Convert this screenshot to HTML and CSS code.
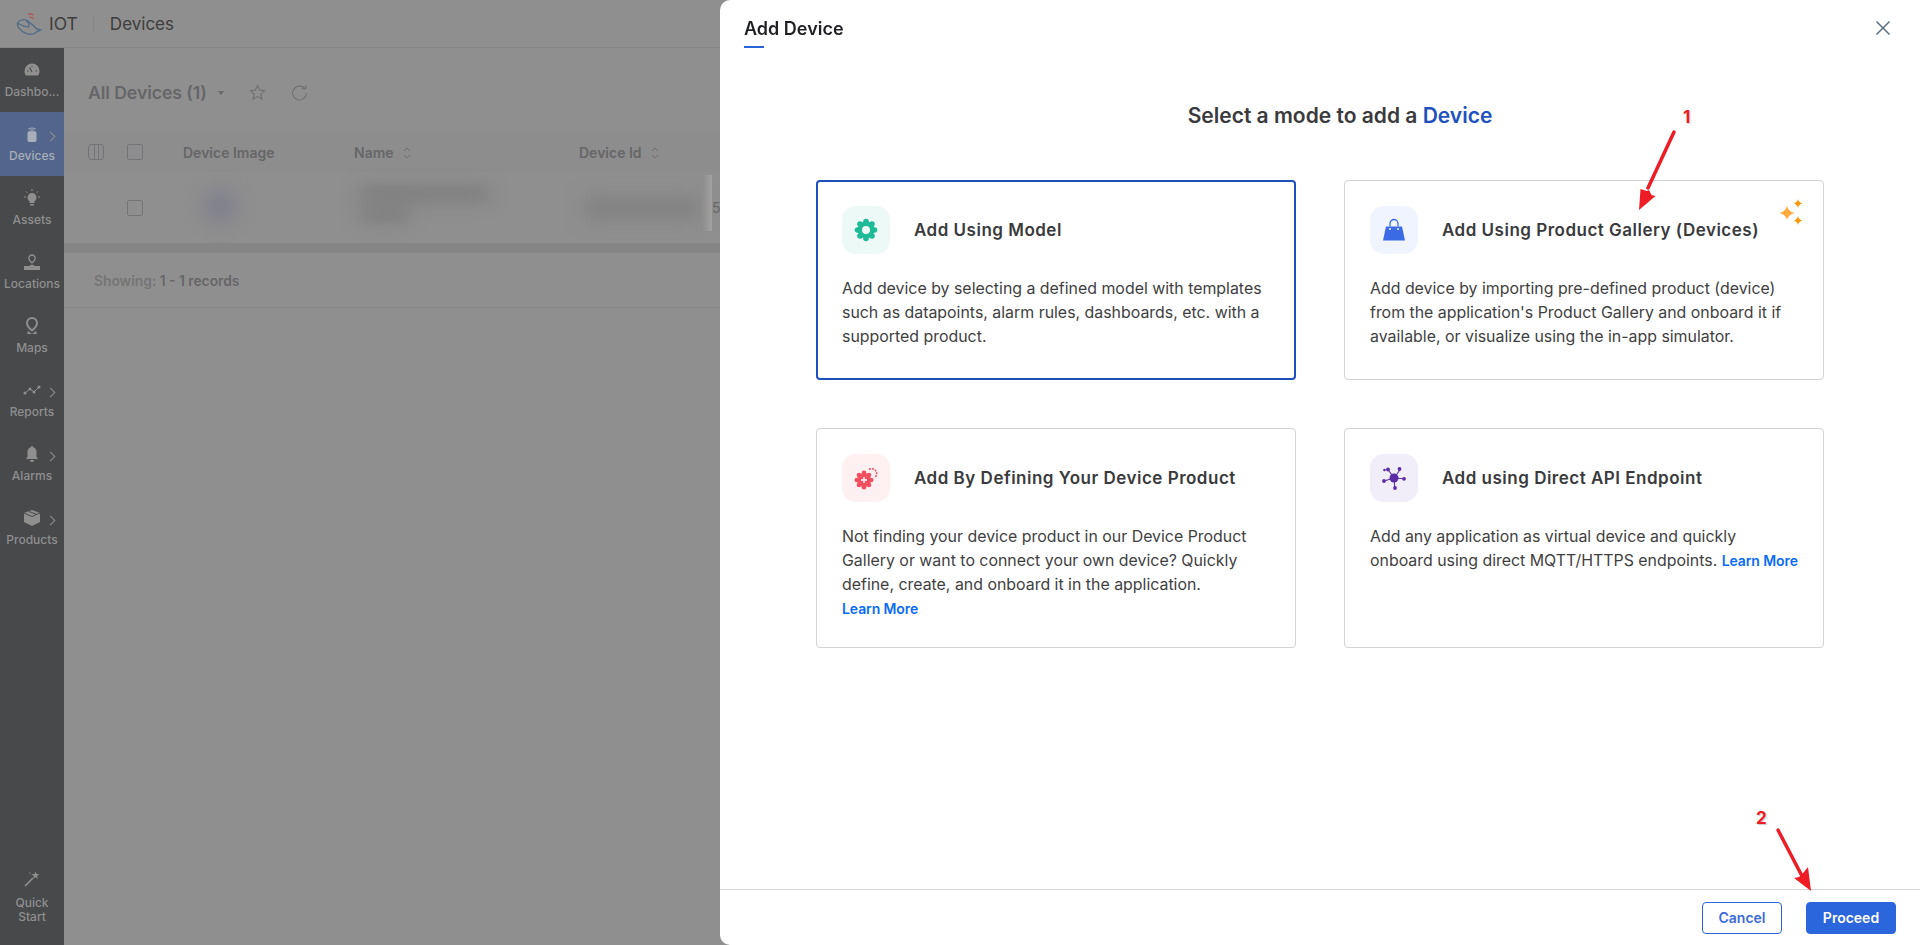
FILE: index.html
```html
<!DOCTYPE html>
<html lang="en">
<head>
<meta charset="utf-8">
<title>IOT - Devices</title>
<link rel="stylesheet" href="styles.css">
</head>
<body>
<div class="app">
  <header class="topbar">
    <svg class="logo" viewBox="0 0 26 24" width="26" height="24" fill="none">
      <path d="M1.500 11c2-3 6-4 9-3l8 6.500c1 2.500 3 3 6 3.500-2 1.500-4 1-5 3-4 2-9 1.500-13-1.500C3.500 17.500 1 14 1.500 11z" stroke="#4d6b85" stroke-width="1.300"/>
      <path d="M2 11.500c3 1.500 8 3.500 11 3.500M10 8.500c2.500 2 3.500 4 3 6.500" stroke="#4d6b85" stroke-width="1.100"/>
      <path d="M12 2.500c2-.8 4-.6 5.500.5M13 5.500c1.500-.5 3.500-.2 4.500 1.500" stroke="#a85a5a" stroke-width="1.300"/>
    </svg>
    <span class="app-name">IOT</span>
    <span class="divider"></span>
    <span class="page-name">Devices</span>
  </header>
  <div class="workspace">
    <nav class="sidebar">
      <a class="nav-item">
        <svg viewBox="0 0 16 16" width="16" height="16"><path class="ic" d="M8 1.500a7.500 7.500 0 0 0-7.500 7.500c0 1.800.5 3.400 1.500 4.500h12c1-1.100 1.500-2.700 1.500-4.500A7.500 7.500 0 0 0 8 1.500z"/><path d="M8 10 5.500 5.500M3 9h1.500M11.500 9H13M8 4v1" stroke="#48494b" stroke-width="1.100" fill="none"/></svg>
        <span>Dashbo...</span>
      </a>
      <a class="nav-item nav-active nav-more">
        <svg viewBox="0 0 16 20" width="16" height="20"><rect class="ic" x="3" y="7" width="10" height="12" rx="2"/><path class="arc" d="M4 4.500c2-1.500 6-1.500 8 0M5.500 6c1.500-.7 3.500-.7 5 0"/></svg>
        <span>Devices</span>
      </a>
      <a class="nav-item">
        <svg viewBox="0 0 16 18" width="16" height="18"><path class="ic" d="M8 4a4.500 4.500 0 0 0-2.500 8.200V14h5v-1.800A4.500 4.500 0 0 0 8 4z"/><path class="ic" d="M6 15h4v1.500H6z"/><path d="M8 0v2M2 2.500l1.300 1.300M14 2.500l-1.300 1.300M0 8h2M14 8h2" stroke="#8f8f8f" stroke-width="1"/></svg>
        <span>Assets</span>
      </a>
      <a class="nav-item">
        <svg viewBox="0 0 16 16" width="16" height="16"><path d="M8 1a3.200 3.200 0 0 0-3.200 3.200C4.800 6.500 8 9 8 9s3.200-2.500 3.200-4.800A3.200 3.200 0 0 0 8 1z" fill="none" stroke="#8f8f8f" stroke-width="1.300"/><path class="ic" d="M0 12h5l3-1.500 3 1.500h5v4H0z"/></svg>
        <span>Locations</span>
      </a>
      <a class="nav-item">
        <svg viewBox="0 0 16 18" width="16" height="18"><path d="M8 1a5 5 0 0 0-5 5c0 3.500 5 7.500 5 7.500s5-4 5-7.500a5 5 0 0 0-5-5z" fill="none" stroke="#8f8f8f" stroke-width="2"/><path class="ic" d="M4 14l4 3 4-3 1 3H3z"/></svg>
        <span>Maps</span>
      </a>
      <a class="nav-item nav-more">
        <svg viewBox="0 0 18 10" width="18" height="16"><path d="M2 8l5-4 4 3 5-5" stroke="#8f8f8f" stroke-width="1" fill="none"/><circle class="ic" cx="2" cy="8" r="1.500"/><circle class="ic" cx="7" cy="4" r="1.500"/><circle class="ic" cx="11" cy="7" r="1.500"/><circle class="ic" cx="16" cy="2" r="1.500"/></svg>
        <span>Reports</span>
      </a>
      <a class="nav-item nav-more">
        <svg viewBox="0 0 16 18" width="16" height="18"><path class="ic" d="M8 1a1.300 1.300 0 0 0-1.300 1.300C4.500 3 3.500 5 3.500 7v4.500L2 14h12l-1.500-2.500V7c0-2-1-4-3.200-4.700A1.300 1.300 0 0 0 8 1z"/><path class="ic" d="M6 15h4a2 2 0 0 1-4 0z"/></svg>
        <span>Alarms</span>
      </a>
      <a class="nav-item nav-more">
        <svg viewBox="0 0 16 16" width="16" height="16"><path class="ic" d="M8 0l8 3v9l-8 4-8-4V3z"/><path d="M0 3l8 3.500L16 3M5 1.500l8 3" stroke="#48494b" stroke-width="1" fill="none"/></svg>
        <span>Products</span>
      </a>
      <a class="nav-item nav-bottom">
        <svg viewBox="0 0 16 16" width="16" height="16"><path d="M1 15l8-8" stroke="#8f8f8f" stroke-width="1.700"/><path class="ic" d="M11.500.5l1 2.600 2.900.1-2.300 1.800.8 2.800-2.400-1.600-2.400 1.600.8-2.800-2.300-1.800 2.900-.1z"/><circle class="ic" cx="6" cy="2" r=".7"/></svg>
        <span>Quick<br>Start</span>
      </a>
    </nav>
    <main class="content">
      <div class="view-bar">
        <h1 class="view-title">All Devices (1)</h1>
        <span class="caret"></span>
        <svg class="view-icon" viewBox="0 0 16 16" width="17" height="17" fill="none"><path d="M8 1.500l2 4.200 4.600.6-3.400 3.200.9 4.600L8 11.800l-4.100 2.300.9-4.600L1.400 6.300 6 5.700z" stroke="#6f6f6f" stroke-width="1"/></svg>
        <svg class="view-icon" viewBox="0 0 16 16" width="17" height="17" fill="none"><path d="M13.500 5A6.500 6.500 0 1 0 14.500 9M10 4.500h4V1" stroke="#6f6f6f" stroke-width="1"/></svg>
      </div>
      <div class="table">
        <div class="t-row t-head">
          <span class="col-ic"><span class="col-toggle"></span></span>
          <span class="col-check"><span class="check"></span></span>
          <span class="col-image">Device Image</span>
          <span class="col-name">Name <svg class="sort" viewBox="0 0 8 12" width="8" height="12" fill="none"><path d="M1 4l3-3 3 3M1 8l3 3 3-3" stroke="#6f6f6f"/></svg></span>
          <span class="col-id">Device Id <svg class="sort" viewBox="0 0 8 12" width="8" height="12" fill="none"><path d="M1 4l3-3 3 3M1 8l3 3 3-3" stroke="#6f6f6f"/></svg></span>
        </div>
        <div class="t-row t-body">
          <span class="col-ic"></span>
          <span class="col-check"><span class="check"></span></span>
          <span class="col-image"><span class="blur-thumb"></span></span>
          <span class="col-name"><span class="blur-line"></span><span class="blur-line blur-short"></span></span>
          <span class="col-id"><span class="blur-line blur-id"></span></span>
          <span class="fade-edge"></span>
          <span class="cut-digit">5</span>
        </div>
        <div class="t-scroll"></div>
      </div>
      <div class="records"><span class="records-label">Showing:</span> 1 - 1 records</div>
    </main>
  </div>
</div>

<aside class="panel">
  <div class="panel-head">
    <h2 class="panel-title">Add Device</h2>
    <svg class="panel-close" viewBox="0 0 16 16" width="16" height="16" fill="none"><path d="M1.500 1.500l13 13M14.500 1.500l-13 13" stroke="#5c6f82" stroke-width="1.500"/></svg>
  </div>
  <div class="panel-body">
    <h3 class="mode-title">Select a mode to add a <span class="accent">Device</span></h3>
    <div class="mode-grid">
      <section class="mode-card mode-selected">
        <div class="mode-head">
          <span class="tile tile-teal">
            <svg viewBox="0 0 24 24" width="24" height="24"><g fill="#1fbb98"><circle cx="12" cy="12" r="8.500"/><circle cx="12" cy="3.500" r="2.800"/><circle cx="12" cy="20.500" r="2.800"/><circle cx="3.500" cy="12" r="2.800"/><circle cx="20.500" cy="12" r="2.800"/><circle cx="6" cy="6" r="2.800"/><circle cx="18" cy="6" r="2.800"/><circle cx="6" cy="18" r="2.800"/><circle cx="18" cy="18" r="2.800"/></g><circle cx="12" cy="12" r="4" fill="#ecf9f6"/></svg>
          </span>
          <h4 class="mode-name">Add Using Model</h4>
        </div>
        <p class="mode-text">Add device by selecting a defined model with templates such as datapoints, alarm rules, dashboards, etc. with a supported product.</p>
      </section>
      <section class="mode-card">
        <div class="mode-head">
          <span class="tile tile-blue">
            <svg viewBox="0 0 24 24" width="24" height="24"><path d="M4 8.500h16l3 14H1z" fill="#3a6be4"/><path d="M8 8.500V5.500a4 4 0 0 1 8 0v3" fill="none" stroke="#3a6be4" stroke-width="1.300"/><circle cx="8" cy="11" r="1" fill="#f0f4fe"/><circle cx="16" cy="11" r="1" fill="#f0f4fe"/></svg>
          </span>
          <h4 class="mode-name">Add Using Product Gallery (Devices)</h4>
        </div>
        <p class="mode-text">Add device by importing pre-defined product (device) from the application's Product Gallery and onboard it if available, or visualize using the in-app simulator.</p>
        <svg class="sparkle" viewBox="0 0 24 28" width="24" height="28"><path d="M8 7Q9.500 12.500 15.500 14 9.500 15.500 8 21 6.500 15.500.5 14 6.500 12.500 8 7z" fill="#ffab40"/><path d="M19 0Q19.800 3.700 23.500 4.500 19.800 5.300 19 9 18.200 5.300 14.500 4.500 18.200 3.700 19 0zM19 17Q19.800 20.700 23.500 21.500 19.800 22.300 19 26 18.200 22.300 14.500 21.500 18.200 20.700 19 17z" fill="#ff9500"/></svg>
      </section>
      <section class="mode-card">
        <div class="mode-head">
          <span class="tile tile-red">
            <svg viewBox="0 0 24 24" width="24" height="24"><g fill="#f2505f"><circle cx="10" cy="14" r="7"/><circle cx="10" cy="6.800" r="2.300"/><circle cx="10" cy="21.200" r="2.300"/><circle cx="2.800" cy="14" r="2.300"/><circle cx="17.200" cy="14" r="2.300"/><circle cx="5" cy="9" r="2.300"/><circle cx="15" cy="9" r="2.300"/><circle cx="5" cy="19" r="2.300"/><circle cx="15" cy="19" r="2.300"/></g><path d="M10 11v6M7 14h6" stroke="#fff" stroke-width="1.400"/><path d="M15 3.500a5 5 0 0 1 7.500 5.500 5 5 0 0 1-2 2.500" fill="none" stroke="#f2505f" stroke-width="1.500" stroke-dasharray="2 1"/></svg>
          </span>
          <h4 class="mode-name">Add By Defining Your Device Product</h4>
        </div>
        <p class="mode-text">Not finding your device product in our Device Product Gallery or want to connect your own device? Quickly define, create, and onboard it in the application.<br><a class="learn">Learn More</a></p>
      </section>
      <section class="mode-card">
        <div class="mode-head">
          <span class="tile tile-purple">
            <svg viewBox="0 0 24 24" width="24" height="24"><g stroke="#5b2ea6" stroke-width="1.100"><path d="M12 12L6 3.500M12 12l5.500-7.500M12 12l10 .8M12 12l.8 10M12 12L2 15"/></g><g fill="#5b2ea6"><circle cx="12" cy="12" r="4.500"/><circle cx="6" cy="3.500" r="1.900"/><circle cx="17.500" cy="3" r="1.900"/><circle cx="22" cy="12.800" r="1.900"/><circle cx="13" cy="22" r="1.900"/><circle cx="2" cy="15" r="1.900"/><circle cx="2.500" cy="4" r="1.300"/></g></svg>
          </span>
          <h4 class="mode-name">Add using Direct API Endpoint</h4>
        </div>
        <p class="mode-text">Add any application as virtual device and quickly<br>onboard using direct MQTT/HTTPS endpoints. <a class="learn">Learn More</a></p>
      </section>
    </div>
  </div>
  <footer class="panel-foot">
    <button class="btn btn-ghost">Cancel</button>
    <button class="btn btn-primary">Proceed</button>
  </footer>
</aside>

<svg class="arrow arrow-one" viewBox="0 0 40 82" width="40" height="82"><path d="M38 2 12 58" stroke="#ee1c25" stroke-width="3.500" stroke-linecap="round" fill="none"/><path d="M3 80 4.500 59 11 61l2-1 2.500 5 4 1z" fill="#ee1c25"/></svg>
<span class="arrow-num num-one">1</span>
<svg class="arrow arrow-two" viewBox="0 0 40 66" width="40" height="66"><path d="M3 3 27 49" stroke="#ee1c25" stroke-width="3.500" stroke-linecap="round" fill="none"/><path d="M36 64 19 51l5-1 3-3 2-2 4-5z" fill="#ee1c25"/></svg>
<span class="arrow-num num-two">2</span>
</body>
</html>
```
FILE: styles.css
```css
* { box-sizing: border-box; }
html, body { margin: 0; height: 100%; overflow: hidden; }
body { font-family: Inter, "Noto Sans", sans-serif; background: #8f8f8f; color: #3a3a3c; }
h1, h2, h3, h4, p { margin: 0; }

.app { display: flex; flex-direction: column; height: 945px; }
.topbar { height: 48px; flex: none; display: flex; align-items: center; padding-left: 16px; border-bottom: 1px solid #868686; }
.logo { margin-right: 7px; }
.app-name { font-size: 17.500px; color: #3d3d3d; }
.divider { width: 1px; height: 18px; background: #868686; margin: 0 16px 0 15px; }
.page-name { font-size: 17px; color: #3d3d3d; }

.workspace { flex: 1; display: flex; min-height: 0; }
.sidebar { width: 64px; flex: none; background: #48494b; display: flex; flex-direction: column; }
.nav-item { position: relative; height: 64px; flex: none; display: flex; flex-direction: column; align-items: center; padding-top: 13px; color: #8f8f8f; font-size: 12px; font-weight: 500; line-height: 18px; text-align: center; }
.nav-item svg { display: block; height: 18px; margin-bottom: 4px; }
.ic { fill: #8f8f8f; }
.arc { fill: none; stroke: #a8aeba; stroke-width: 1.100; }
.nav-active { background: #53658a; color: #a8aeba; }
.nav-active .ic { fill: #a8aeba; }
.nav-more::after { content: ""; position: absolute; left: 47px; top: 21px; width: 6px; height: 6px; border-top: 1px solid #8f8f8f; border-right: 1px solid #8f8f8f; transform: rotate(45deg); }
.nav-bottom { margin-top: auto; height: 75px; padding-top: 0; line-height: 14px; }
.nav-bottom svg { margin-bottom: 8px; }

.content { flex: 1; min-width: 0; padding-top: 26px; }
.view-bar { display: flex; align-items: center; height: 36px; padding-left: 24px; }
.view-title { font-size: 17.700px; font-weight: 600; color: #666668; letter-spacing: -.1px; }
.caret { width: 0; height: 0; margin-left: 11px; border: 3.500px solid transparent; border-top: 4px solid #6a6a6a; margin-top: 4px; }
.view-icon { margin-left: 25px; }
.view-icon + .view-icon { margin-left: 25px; }

.table { margin-top: 22px; }
.t-row { display: flex; align-items: center; }
.t-head { height: 40px; font-size: 14px; font-weight: 600; color: #666668; background: #8d8d8d; }
.t-body { height: 71px; padding-top: 1px; position: relative; }
.col-ic { width: 63px; padding-left: 24px; flex: none; }
.col-toggle { display: block; width: 16px; height: 16px; border: 1px solid #747478; border-radius: 3px; background: linear-gradient(90deg, transparent 5px, #747478 5px, #747478 6px, transparent 6px, transparent 9px, #747478 9px, #747478 10px, transparent 10px); }
.col-check { width: 56px; flex: none; }
.check { display: block; width: 16px; height: 16px; border: 1px solid #747478; border-radius: 2px; }
.col-image { width: 171px; flex: none; }
.col-name { width: 225px; flex: none; }
.col-id { flex: 1; min-width: 0; }
.sort { margin-left: 6px; vertical-align: -1px; }
.blur-thumb { display: block; width: 34px; height: 34px; margin: -4px 0 0 20px; background: #80808c; border-radius: 50%; filter: blur(9px); }
.blur-line { display: block; width: 130px; height: 12px; margin: -8px 0 0 6px; background: #787878; filter: blur(9px); }
.blur-short { width: 50px; margin-top: 8px; }
.blur-id { width: 115px; height: 16px; margin: 0 0 0 6px; background: #7c7c7c; filter: blur(10px); }
.fade-edge { position: absolute; left: 638px; top: 3px; width: 10px; height: 56px; background: linear-gradient(90deg, #8c8c8c, #a2a2a2); }
.cut-digit { position: absolute; left: 648px; top: 27px; font-size: 14px; line-height: 17px; color: #666668; }
.t-scroll { height: 10px; background: #858585; }
.records { padding: 20px 0 17px 30px; font-size: 13.800px; line-height: 17px; font-weight: 600; color: #666668; border-bottom: 1px solid #878787; }
.records-label { color: #757575; }

.panel { position: fixed; left: 720px; top: 0; width: 1200px; height: 945px; background: #fff; border-radius: 10px 0 0 10px; display: flex; flex-direction: column; }
.panel-head { position: relative; height: 48px; flex: none; padding: 18px 0 0 24px; }
.panel-title { font-size: 18px; line-height: 22px; font-weight: 600; color: #1f2024; }
.panel-title::after { content: ""; position: absolute; left: 24px; top: 46px; width: 20px; height: 2px; background: #2b63d9; }
.panel-close { position: absolute; right: 29px; top: 20px; }
.panel-body { flex: 1; padding-top: 55px; }
.mode-title { padding-left: 40px; font-size: 21px; line-height: 26px; font-weight: 600; text-align: center; color: #3a3a3c; }
.accent { color: #1e52bd; }
.mode-grid { width: 1008px; margin: 51px auto 0; display: grid; grid-template-columns: 480px 480px; grid-template-rows: 200px 220px; gap: 48px; }
.mode-card { position: relative; border: 1px solid #d3d3d3; border-radius: 4px; padding: 25px; }
.mode-selected { border: 2px solid #1c4fb8; padding: 24px; }
.mode-head { display: flex; align-items: center; gap: 24px; }
.tile { width: 48px; height: 48px; flex: none; border-radius: 14px; display: flex; align-items: center; justify-content: center; }
.tile-teal { background: #ecf9f6; }
.tile-blue { background: #f0f4fe; }
.tile-red { background: #fff0f1; }
.tile-purple { background: #f1edf9; }
.mode-name { font-size: 17px; line-height: 24px; font-weight: 600; letter-spacing: .5px; color: #3a3a3c; }
.mode-text { margin: 23px -8px 0 0; font-size: 15.900px; line-height: 24px; color: #3f3f42; }
.learn { font-size: 14px; font-weight: 600; letter-spacing: -.1px; color: #0a6cf5; white-space: nowrap; }
.sparkle { position: absolute; right: 20px; top: 18px; }
.panel-foot { height: 56px; flex: none; border-top: 1px solid #d5d5d5; display: flex; justify-content: flex-end; align-items: center; gap: 24px; padding-right: 24px; }
.btn { height: 32px; border-radius: 4px; font-family: inherit; font-size: 14px; font-weight: 600; }
.btn-ghost { width: 80px; background: #fff; border: 1px solid #2b66dc; color: #3c6bd8; }
.btn-primary { width: 90px; background: #2b66dc; border: 1px solid #2b66dc; color: #fff; }

.arrow { position: fixed; }
.arrow-one { left: 1636px; top: 130px; }
.arrow-two { left: 1775px; top: 827px; }
.arrow-num { position: fixed; font-size: 17px; line-height: 18px; font-weight: 700; color: #ee1c25; text-shadow: 1px 1px 1px #ccc; }
.num-one { left: 1683px; top: 108px; }
.num-two { left: 1756px; top: 809px; }
```
